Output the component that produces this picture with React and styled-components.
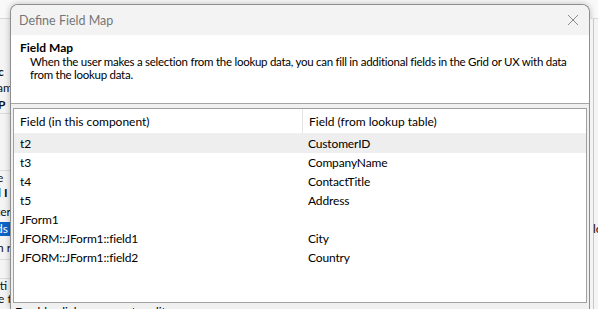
import React from "react";
import styled, { createGlobalStyle } from "styled-components";

const GlobalStyle = createGlobalStyle`
    html, body {
      margin: 0;
      padding: 0;
      width: 598px;
      height: 309px;
      overflow: hidden;
      background: #f7f7f7;
      font-family: "Lato", "Noto Sans", sans-serif;
      font-size: 12px;
      color: #000;
    }
`;

const Page = styled.div`
    display: flex;
    width: 598px;
    height: 309px;
    overflow: hidden;
    background: #f9f9f9;
`;

const SideStrip = styled.div`
    width: ${props => props.width}px;
    flex: none;
    display: flex;
    flex-direction: column;
    overflow: hidden;
    border-top: 1px solid #d8d8d8;
    margin-top: 18px;
    background: ${props => props.edge
        ? 'linear-gradient(to right, #f4f4f4 3px, #c8c8c8 3px, #c8c8c8 4px, #f4f4f4 4px)'
        : '#f4f4f4'};
`;

const StripLine = styled.div`
    box-sizing: border-box;
    height: ${props => props.h || 16}px;
    line-height: ${props => props.h || 16}px;
    white-space: nowrap;
    font-weight: ${props => props.bold ? 700 : 400};
    color: ${props => props.selected ? '#fff' : '#111'};
    background: ${props => props.selected ? '#0a64c8' : 'transparent'};
    border-bottom: ${props => props.rule ? '1px solid #dcdcdc' : 'none'};
    text-indent: ${props => props.indent || 0}px;
`;

const Dialog = styled.div`
    flex: 1;
    margin-top: 4px;
    display: flex;
    flex-direction: column;
    border: 1px solid #8e8e8e;
    border-bottom: none;
    border-top-right-radius: 8px;
    border-top-left-radius: 8px;
    background: #f0f0f0;
    box-shadow: 0 0 6px rgba(0, 0, 0, 0.25);
    overflow: hidden;
    min-width: 0;
`;

const TitleBar = styled.div`
    height: 30px;
    flex: none;
    display: flex;
    align-items: center;
    justify-content: space-between;
    padding: 0 5px 0 8px;
    background: #f3f3f3;
`;

const Title = styled.span`
    color: #767676;
    font-size: 12.5px;
`;

const CloseButton = styled.button`
    width: 22px;
    height: 22px;
    border: none;
    background: transparent;
    padding: 0;
    display: flex;
    align-items: center;
    justify-content: center;
`;

const Banner = styled.div`
    flex: none;
    height: 69px;
    box-sizing: border-box;
    padding: 5px 9px 0;
    background: #fff;
    border-bottom: 1px solid #a5a5a5;
`;

const BannerTitle = styled.div`
    font-weight: 700;
    line-height: 15px;
`;

const BannerText = styled.div`
    padding-left: 10px;
    font-size: 11.5px;
    letter-spacing: -0.27px;
    line-height: 13px;
    color: #000;
`;

const Body = styled.div`
    flex: 1;
    display: flex;
    flex-direction: column;
    padding: 4px 2px 0;
`;

const Table = styled.div`
    height: 195px;
    flex: none;
    box-sizing: border-box;
    border: 1px solid #a0a0a0;
    background: #fff;
    display: flex;
    flex-direction: column;
`;

const Row = styled.div`
    display: grid;
    grid-template-columns: 288px 1fr;
    height: ${props => props.header ? 24 : 19}px;
    flex: none;
    align-items: center;
    letter-spacing: ${props => props.header ? 0 : -0.15}px;
    background: ${props => props.selected ? '#eeeeee' : '#fff'};
    border-bottom: ${props => props.header ? '1px solid #f0f0f0' : 'none'};
`;

const Cell = styled.div`
    height: 100%;
    display: flex;
    align-items: center;
    padding-left: 6px;
    white-space: nowrap;
    overflow: hidden;
    border-left: ${props => props.divider ? '1px solid #e5e5e5' : 'none'};
`;

const Hint = styled.div`
    padding: 2px 0 0 2px;
    line-height: 14px;
    color: #000;
`;

const rows = [
    ["t2", "CustomerID"],
    ["t3", "CompanyName"],
    ["t4", "ContactTitle"],
    ["t5", "Address"],
    ["JForm1", ""],
    ["JFORM::JForm1::field1", "City"],
    ["JFORM::JForm1::field2", "Country"],
];

const CloseIcon = () => (
    <svg width="12" height="12" viewBox="0 0 12 12">
        <path d="M1 1 L11 11 M11 1 L1 11" stroke="#8a8a8a" strokeWidth="1" fill="none" />
    </svg>
);

export default function App() {
    return (
        <>
            <GlobalStyle />
            <Page>
                <SideStrip width={10}>
                    <StripLine h={44} />
                    <StripLine h={17} bold indent={-2}>c</StripLine>
                    <StripLine h={16} indent={-3}>am</StripLine>
                    <StripLine h={18} bold indent={-2} rule>P</StripLine>
                    <StripLine h={57} rule />
                    <StripLine h={14} indent={-3}>e</StripLine>
                    <StripLine h={16} bold indent={-2}>l I</StripLine>
                    <StripLine h={21} indent={-4}>ter</StripLine>
                    <StripLine h={14} selected indent={-4}>ds</StripLine>
                    <StripLine h={24} indent={-3} rule>n r</StripLine>
                    <StripLine h={19} rule />
                    <StripLine h={13} indent={-3}>lti</StripLine>
                    <StripLine h={13} indent={-2}>e f</StripLine>
                </SideStrip>
                <Dialog>
                    <TitleBar>
                        <Title>Define Field Map</Title>
                        <CloseButton><CloseIcon /></CloseButton>
                    </TitleBar>
                    <Banner>
                        <BannerTitle>Field Map</BannerTitle>
                        <BannerText>
                            When the user makes a selection from the lookup data, you can fill in additional fields in the Grid or UX with data from the lookup data.
                        </BannerText>
                    </Banner>
                    <Body>
                        <Table>
                            <Row header>
                                <Cell>Field (in this component)</Cell>
                                <Cell divider>Field (from lookup table)</Cell>
                            </Row>
                            {rows.map(([field, lookup], i) => (
                                <Row key={field} selected={i === 0}>
                                    <Cell>{field}</Cell>
                                    <Cell>{lookup}</Cell>
                                </Row>
                            ))}
                        </Table>
                        <Hint>Double click on a row to edit</Hint>
                    </Body>
                </Dialog>
                <SideStrip width={8} edge>
                    <StripLine h={202} />
                    <StripLine h={16} indent={3}>lc</StripLine>
                </SideStrip>
            </Page>
        </>
    );
}
